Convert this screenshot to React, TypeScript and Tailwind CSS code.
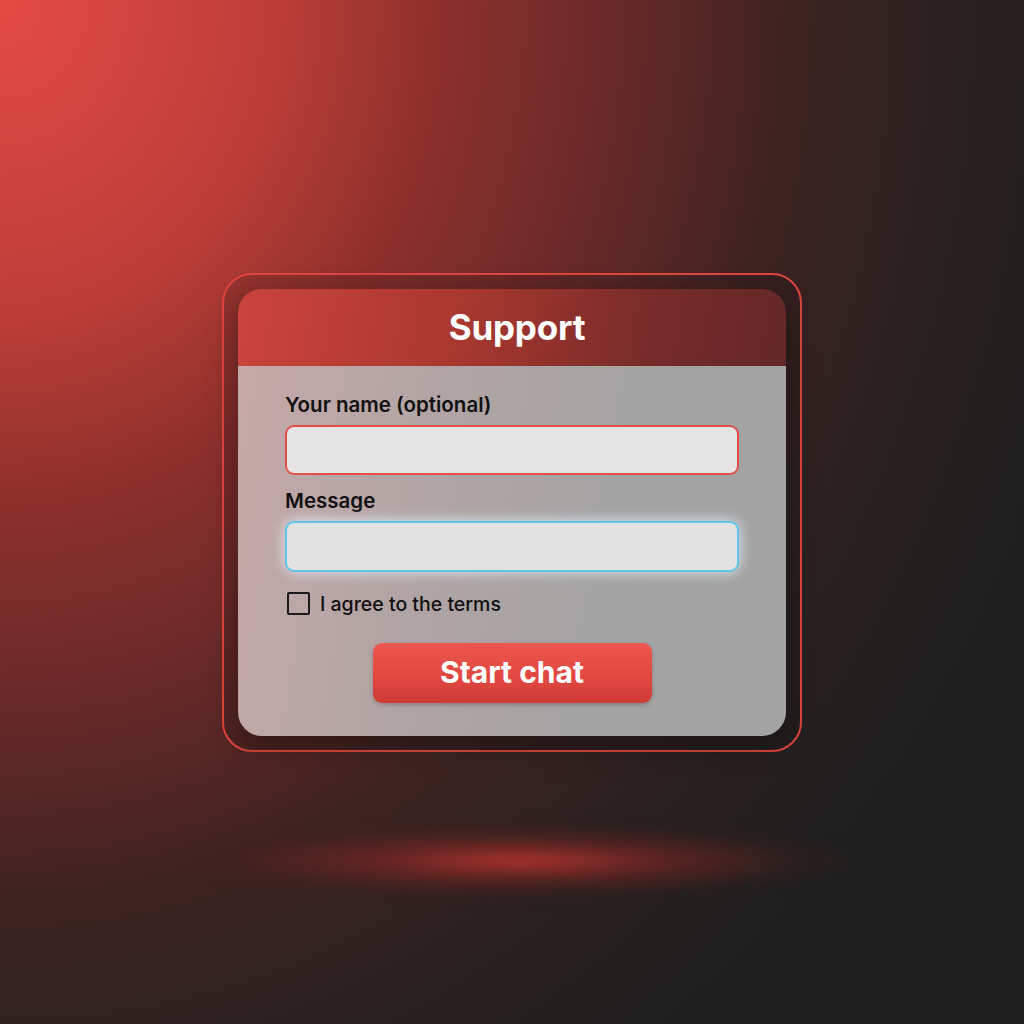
import React from "react";

export default function App() {
  return (
    <div
      className="relative w-[1024px] h-[1024px] overflow-hidden flex items-center justify-center bg-[radial-gradient(ellipse_1400px_1600px_at_0%_0%,#e44b43_0%,#bb3d37_20%,#8e302c_31%,#5e2826_47%,#3e2322_56%,#2a2020_68%,#1f1f1f_80%,#1e1e1e_100%)]"
      style={{ fontFamily: "Inter, 'Noto Sans', sans-serif" }}
    >
      <div className="absolute left-[190px] top-[825px] w-[660px] h-[72px] rounded-[50%] bg-[radial-gradient(ellipse_at_center,rgba(205,55,48,0.8)_0%,rgba(150,40,36,0.45)_32%,rgba(80,30,28,0.15)_62%,rgba(0,0,0,0)_100%)] blur-[6px]" />
      <div className="relative w-[580px] h-[479px] rounded-[30px] border-2 border-[#e0463f] p-[14px] bg-[rgba(30,20,20,0.15)]">
        <div className="w-full h-full rounded-[24px] overflow-hidden flex flex-col shadow-[0_10px_30px_rgba(0,0,0,0.35)]">
          <div className="h-[77px] shrink-0 flex items-center justify-center pl-[10px] bg-[linear-gradient(100deg,#cb443d_0%,#a9382f_40%,#772b29_75%,#632826_100%)]">
            <span className="text-white text-[35px] font-bold tracking-[-0.2px]">Support</span>
          </div>
          <div className="flex-1 flex flex-col px-[47px] pt-[27px] bg-[linear-gradient(100deg,#c6a8a8_0%,#b1a4a4_35%,#a4a3a3_65%,#a3a3a3_100%)]">
            <label className="text-[20.5px] leading-[24px] font-semibold text-[#111]">Your name (optional)</label>
            <div className="mt-[8px] h-[50px] rounded-[9px] border-2 border-[#e0504b] bg-[#e4e4e4]" />
            <label className="mt-[14px] text-[20.5px] leading-[24px] font-semibold text-[#111]">Message</label>
            <div className="mt-[8px] h-[51px] rounded-[9px] border-2 border-[#5ec4ea] bg-[#e2e2e2] shadow-[0_0_14px_rgba(230,245,255,0.9)]" />
            <div className="mt-[20px] flex items-center gap-[10px] pl-[2px]">
              <div className="w-[23px] h-[23px] border-2 border-[#1a1a1a] rounded-[2px]" />
              <span className="text-[19.5px] leading-[24px] font-medium text-[#111]">I agree to the terms</span>
            </div>
            <div className="mt-[27px] flex justify-center">
              <button className="w-[279px] h-[60px] rounded-[9px] bg-[linear-gradient(180deg,#ec574e_0%,#e04740_60%,#cf3a34_100%)] shadow-[0_2px_4px_rgba(0,0,0,0.2)] text-white text-[30px] font-bold">
                Start chat
              </button>
            </div>
          </div>
        </div>
      </div>
    </div>
  );
}
